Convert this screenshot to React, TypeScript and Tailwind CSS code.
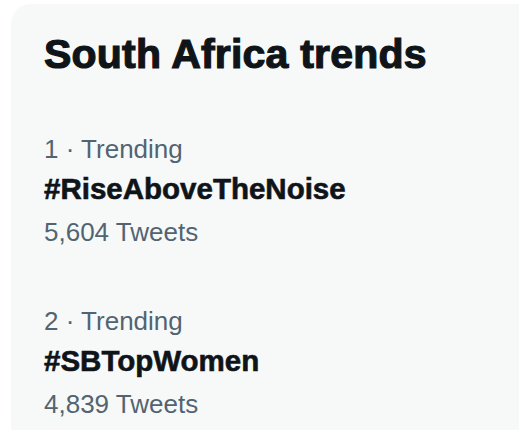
const trends = [
  { rank: 1, name: "#RiseAboveTheNoise", count: "5,604 Tweets" },
  { rank: 2, name: "#SBTopWomen", count: "4,839 Tweets" },
];

export default function App() {
  return (
    <div className="h-[430px] w-[519px] overflow-hidden bg-white font-['Liberation_Sans',Arial,sans-serif]">
      <section className="ml-[11px] mt-[4px] h-[500px] w-[560px] rounded-[20px] bg-[#f7f9f9]">
        <h2 className="px-[33px] pt-[26px] pb-[28px] text-[41px] font-bold leading-[48px] tracking-[0.2px] text-[#0f1419] [-webkit-text-stroke:1.2px_#0f1419]">
          South Africa trends
        </h2>
        {trends.map((t) => (
          <div key={t.rank} className="px-[33px] py-6">
            <p className="text-[26px] leading-[38px] text-[#536471]">
              {t.rank} · Trending
            </p>
            <p className="text-[29.5px] font-bold leading-[42px] text-[#0f1419] [-webkit-text-stroke:0.6px_#0f1419]">
              {t.name}
            </p>
            <p className="text-[26px] leading-[44px] text-[#536471]">
              {t.count}
            </p>
          </div>
        ))}
      </section>
    </div>
  );
}
